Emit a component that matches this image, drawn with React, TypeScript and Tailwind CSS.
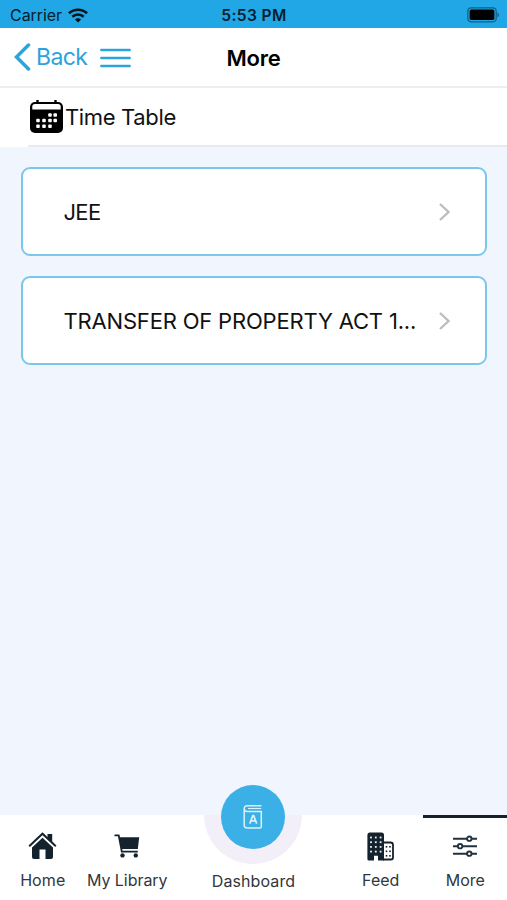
import type { ReactNode } from "react";

function Wifi() {
  return (
    <svg width="20" height="15" viewBox="0 0 20 15" fill="none" stroke="#06131b" strokeWidth="2.7">
      <path d="M1 5.2C6 .6 14 .6 19 5.2" />
      <path d="M4.3 8.8c3.3-3.1 8.1-3.1 11.4 0" />
      <path d="M10 14.6 6.9 11.5c1.8-1.6 4.4-1.6 6.2 0Z" fill="#06131b" stroke="none" />
    </svg>
  );
}

function Battery() {
  return (
    <svg width="33" height="16" viewBox="0 0 33 16">
      <rect x=".8" y=".8" width="28.4" height="14" rx="3.5" fill="none" stroke="#0c6086" strokeWidth="1.2" />
      <rect x="2.6" y="2.6" width="24.8" height="10.4" rx="1.8" fill="#000" />
      <path d="M30.4 5.4c2 .9 2 3.9 0 4.8Z" fill="#0c6086" />
    </svg>
  );
}

const calendarDots = [
  [20, 15], [25.2, 15],
  [8, 20.5], [14, 20.5], [20, 20.5], [25.2, 20.5],
  [8, 26.3], [14, 26.3], [20, 26.3],
];

function CalendarIcon() {
  return (
    <svg width="33" height="33" viewBox="0 0 33 33">
      <rect x="0" y="2" width="33" height="31" rx="5" fill="#000" />
      <path d="M2.3 9.5V6.5Q2.3 4 5 4h23q2.7 0 2.7 2.5v3Z" fill="#fff" />
      <path d="M7.5 0v4M25.5 0v4" stroke="#000" strokeWidth="2.4" />
      {calendarDots.map(([x, y]) => (
        <rect key={`${x}-${y}`} x={x - 1.8} y={y - 1.8} width="3.6" height="3.6" rx="1" fill="#fff" />
      ))}
    </svg>
  );
}

function Card({ title, spacing }: { title: string; spacing: string }) {
  return (
    <div className="flex h-[89px] items-center justify-between rounded-[9px] border-2 border-[#7ac7ec] bg-white pr-[33px] pl-[40.5px]">
      <span className={`pt-px text-[22px] whitespace-nowrap text-[#111] ${spacing}`}>{title}</span>
      <svg width="14" height="20" viewBox="0 0 14 20" fill="none" stroke="#bdbdbf" strokeWidth="2.4">
        <path d="m2 2 8.5 8L2 18" />
      </svg>
    </div>
  );
}

function HomeIcon() {
  return (
    <svg width="29" height="28" viewBox="0 0 29 28" fill="#14222e">
      <path d="M19.5 2h4.7v9l-4.7-4Z" />
      <path d="m1.2 14.2 13.3-12.5 13.3 12.5" fill="none" stroke="#14222e" strokeWidth="2" />
      <path d="M4 15.6 14.5 5.8l10.5 9.8V25q0 2-2 2h-5.5v-9.5h-6V27H6q-2 0-2-2Z" />
    </svg>
  );
}

function CartIcon() {
  return (
    <svg width="26" height="24" viewBox="0 0 26 24" fill="#14222e">
      <path d="M5.2 3.3H25.2L23.8 15H7.5Z" />
      <path d="M.5 1.4h4.2l3.1 16.2h16" fill="none" stroke="#14222e" strokeWidth="1.8" />
      <circle cx="8.5" cy="21.4" r="2.2" />
      <circle cx="21.8" cy="21.4" r="2.2" />
    </svg>
  );
}

function BookIcon() {
  return (
    <svg width="20" height="26" viewBox="0 0 20 26" fill="none" stroke="#d9f2fd" strokeWidth="1.5">
      <path d="M18.5 1.7H4.4Q1.2 1.7 1.2 5v16q0 3 3 3H17q1.3 0 1.3-1.3V7.4H4.2Q1.2 7.4 1.2 4.7" />
      <path d="M5 4.5h13.2" strokeWidth="1.1" />
      <path d="m6.8 19.6 3-8h.9l3 8M8 16.9h4.6" strokeWidth="1.7" />
    </svg>
  );
}

function FeedIcon() {
  return (
    <svg width="27" height="29" viewBox="0 0 27 29">
      <path d="M16 10.5h7.5q2.5 0 2.5 2.5v12.5q0 2-2 2h-8" fill="#fff" stroke="#14222e" strokeWidth="1.8" />
      <path d="M2.5.5h12Q17 .5 17 3v25.5h-6v-4.7H7v4.7H2q-1.6 0-1.6-1.6V3Q.4.5 2.5.5Z" fill="#14222e" />
      {[5.5, 10.2, 14.9, 19.6].map((y) =>
        [4, 8.8, 13.6].map((x) => (
          <rect key={`${x}-${y}`} x={x - 0.9} y={y - 0.9} width="1.8" height="1.8" fill="#e8f1f5" />
        )),
      )}
      {[14.8, 19.3, 23.8].map((y) =>
        [19.5, 23].map((x) => (
          <rect key={`${x}-${y}`} x={x - 0.8} y={y - 0.8} width="1.6" height="1.6" fill="#14222e" />
        )),
      )}
    </svg>
  );
}

function SlidersIcon() {
  return (
    <svg width="24" height="22" viewBox="0 0 24 22" fill="none" stroke="#22313c" strokeWidth="1.9">
      <path d="M0 3.7h14M18.6 3.7H24M0 11.2h4.8M9.4 11.2H24M0 18.7h14M18.6 18.7H24" />
      <circle cx="16.3" cy="3.7" r="2.2" />
      <circle cx="7.1" cy="11.2" r="2.2" />
      <circle cx="16.3" cy="18.7" r="2.2" />
    </svg>
  );
}

function Tab({ label, icon, spacing, active }: { label: string; icon: ReactNode; spacing: string; active?: boolean }) {
  return (
    <div className={`flex flex-col items-center border-t-[3px] ${active ? "border-[#14222e]" : "border-transparent"}`}>
      <div className="flex h-[52px] items-start justify-center pt-[5px]">
        <div className="flex h-[46px] items-center">{icon}</div>
      </div>
      <span className={`pl-px text-[16px] leading-5 whitespace-nowrap text-[#30373d] ${spacing}`}>{label}</span>
    </div>
  );
}

export default function App() {
  return (
    <div className="flex h-[900px] w-full flex-col overflow-hidden bg-[#f1f5fd] font-['Inter','Liberation_Sans',sans-serif] text-black">
      <div className="grid h-7 shrink-0 grid-cols-3 items-center bg-[#21a7e5] pt-[2px] pr-[7px] pl-[10px]">
        <div className="flex items-center gap-[6px]">
          <span className="text-[16px] leading-5 tracking-[-0.05px] text-[#06202e]">Carrier</span>
          <Wifi />
        </div>
        <span className="pt-px pr-[2px] text-center text-[15.5px] leading-5 font-semibold tracking-[0.4px] text-[#06202e]">5:53 PM</span>
        <div className="flex justify-end pb-px">
          <Battery />
        </div>
      </div>
      <header className="grid h-[60px] shrink-0 grid-cols-3 items-center border-b-2 border-[#eeeeef] bg-white px-[14px] text-[#2ca3da]">
        <div className="flex items-center">
          <svg width="17" height="28" viewBox="0 0 17 28" fill="none" stroke="currentColor" strokeWidth="3.5" strokeLinecap="round">
            <path d="M14.5 2 2.5 14l12 12" />
          </svg>
          <span className="ml-[5px] pt-px text-[23px] tracking-[-0.6px]">Back</span>
          <svg className="mt-px ml-[13px] shrink-0" width="31" height="20" viewBox="0 0 31 20" stroke="currentColor" strokeWidth="2.3" strokeLinecap="round">
            <path d="M1.2 2h28.6M1.2 10h28.6M1.2 18h28.6" />
          </svg>
        </div>
        <h1 className="pt-[2px] text-center text-[22px] font-semibold tracking-[-0.25px] text-black">More</h1>
      </header>
      <div className="flex h-[59px] shrink-0 bg-white pl-7">
        <div className="flex grow items-center gap-[2px] border-b-2 border-[#e7eaee] pl-[2px]">
          <CalendarIcon />
          <span className="pt-px text-[22px] tracking-[-0.35px] text-[#111]">Time Table</span>
        </div>
      </div>
      <main className="flex grow flex-col gap-5 pt-5 pr-5 pl-[21px]">
        <Card title="JEE" spacing="tracking-[-0.7px]" />
        <Card title="TRANSFER OF PROPERTY ACT 1..." spacing="tracking-[-0.18px]" />
      </main>
      <nav className="grid h-[85px] shrink-0 grid-cols-6 bg-white">
        <Tab label="Home" icon={<HomeIcon />} spacing="tracking-[0.1px]" />
        <Tab label="My Library" icon={<CartIcon />} spacing="tracking-[-0.05px]" />
        <div className="relative col-span-2 flex flex-col items-center">
          <div className="mr-[2px] h-[49px] w-[98px] rounded-b-full bg-[#f3eff9]" />
          <div className="absolute -top-[30px] left-[52px] flex h-16 w-16 items-center justify-center rounded-full bg-[#3bb0e7]">
            <BookIcon />
          </div>
          <span className="mt-[7px] text-[16px] leading-5 tracking-[0.1px] text-[#30373d]">Dashboard</span>
        </div>
        <Tab label="Feed" icon={<FeedIcon />} spacing="tracking-[0px]" />
        <Tab label="More" icon={<SlidersIcon />} spacing="tracking-[0px]" active />
      </nav>
    </div>
  );
}
